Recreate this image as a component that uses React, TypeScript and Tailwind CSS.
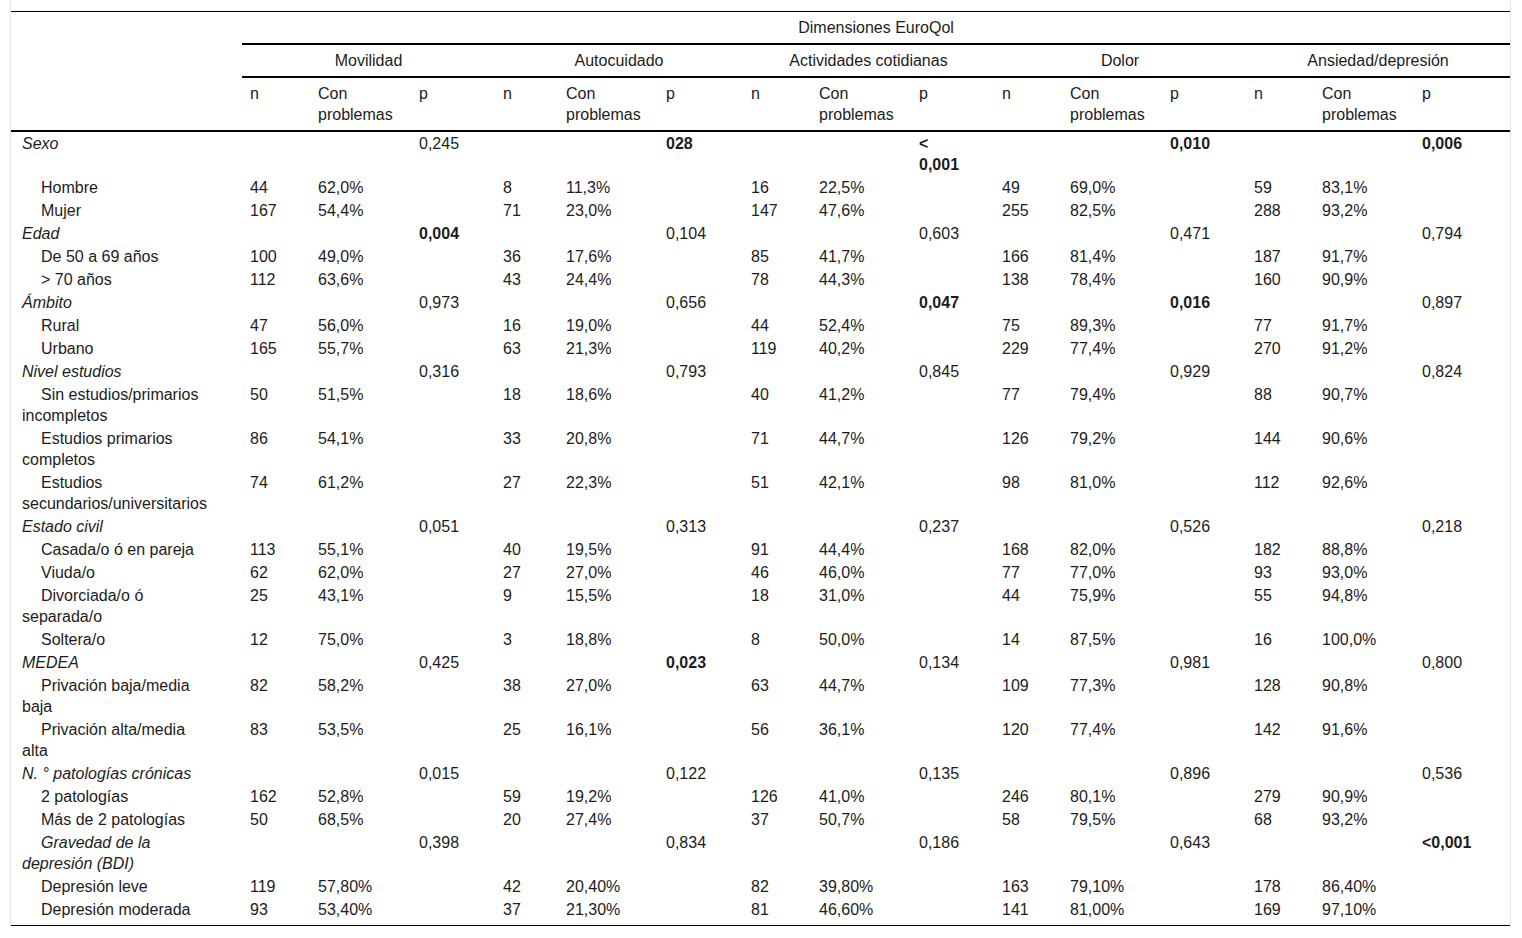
import React from "react";

type P = { v: string; b?: boolean };
type Row = {
  label: string;
  cat?: boolean;
  indentCat?: boolean;
  p?: P[];
  d?: [string, string][];
  last?: boolean;
};

const pv = (s: string): P => (s.startsWith("*") ? { v: s.slice(1), b: true } : { v: s });

const rows: Row[] = [
  { label: "Sexo", cat: true, p: ["0,245", "*028", "*< 0,001", "*0,010", "*0,006"].map(pv) },
  { label: "Hombre", d: [["44", "62,0%"], ["8", "11,3%"], ["16", "22,5%"], ["49", "69,0%"], ["59", "83,1%"]] },
  { label: "Mujer", d: [["167", "54,4%"], ["71", "23,0%"], ["147", "47,6%"], ["255", "82,5%"], ["288", "93,2%"]] },
  { label: "Edad", cat: true, p: ["*0,004", "0,104", "0,603", "0,471", "0,794"].map(pv) },
  { label: "De 50 a 69 años", d: [["100", "49,0%"], ["36", "17,6%"], ["85", "41,7%"], ["166", "81,4%"], ["187", "91,7%"]] },
  { label: "> 70 años", d: [["112", "63,6%"], ["43", "24,4%"], ["78", "44,3%"], ["138", "78,4%"], ["160", "90,9%"]] },
  { label: "Ámbito", cat: true, p: ["0,973", "0,656", "*0,047", "*0,016", "0,897"].map(pv) },
  { label: "Rural", d: [["47", "56,0%"], ["16", "19,0%"], ["44", "52,4%"], ["75", "89,3%"], ["77", "91,7%"]] },
  { label: "Urbano", d: [["165", "55,7%"], ["63", "21,3%"], ["119", "40,2%"], ["229", "77,4%"], ["270", "91,2%"]] },
  { label: "Nivel estudios", cat: true, p: ["0,316", "0,793", "0,845", "0,929", "0,824"].map(pv) },
  { label: "Sin estudios/primarios incompletos", d: [["50", "51,5%"], ["18", "18,6%"], ["40", "41,2%"], ["77", "79,4%"], ["88", "90,7%"]] },
  { label: "Estudios primarios completos", d: [["86", "54,1%"], ["33", "20,8%"], ["71", "44,7%"], ["126", "79,2%"], ["144", "90,6%"]] },
  { label: "Estudios secundarios/universitarios", d: [["74", "61,2%"], ["27", "22,3%"], ["51", "42,1%"], ["98", "81,0%"], ["112", "92,6%"]] },
  { label: "Estado civil", cat: true, p: ["0,051", "0,313", "0,237", "0,526", "0,218"].map(pv) },
  { label: "Casada/o ó en pareja", d: [["113", "55,1%"], ["40", "19,5%"], ["91", "44,4%"], ["168", "82,0%"], ["182", "88,8%"]] },
  { label: "Viuda/o", d: [["62", "62,0%"], ["27", "27,0%"], ["46", "46,0%"], ["77", "77,0%"], ["93", "93,0%"]] },
  { label: "Divorciada/o ó separada/o", d: [["25", "43,1%"], ["9", "15,5%"], ["18", "31,0%"], ["44", "75,9%"], ["55", "94,8%"]] },
  { label: "Soltera/o", d: [["12", "75,0%"], ["3", "18,8%"], ["8", "50,0%"], ["14", "87,5%"], ["16", "100,0%"]] },
  { label: "MEDEA", cat: true, p: ["0,425", "*0,023", "0,134", "0,981", "0,800"].map(pv) },
  { label: "Privación baja/media baja", d: [["82", "58,2%"], ["38", "27,0%"], ["63", "44,7%"], ["109", "77,3%"], ["128", "90,8%"]] },
  { label: "Privación alta/media alta", d: [["83", "53,5%"], ["25", "16,1%"], ["56", "36,1%"], ["120", "77,4%"], ["142", "91,6%"]] },
  { label: "N. ° patologías crónicas", cat: true, p: ["0,015", "0,122", "0,135", "0,896", "0,536"].map(pv) },
  { label: "2 patologías", d: [["162", "52,8%"], ["59", "19,2%"], ["126", "41,0%"], ["246", "80,1%"], ["279", "90,9%"]] },
  { label: "Más de 2 patologías", d: [["50", "68,5%"], ["20", "27,4%"], ["37", "50,7%"], ["58", "79,5%"], ["68", "93,2%"]] },
  { label: "Gravedad de la depresión (BDI)", cat: true, indentCat: true, p: ["0,398", "0,834", "0,186", "0,643", "*<0,001"].map(pv) },
  { label: "Depresión leve", d: [["119", "57,80%"], ["42", "20,40%"], ["82", "39,80%"], ["163", "79,10%"], ["178", "86,40%"]] },
  { label: "Depresión moderada", d: [["93", "53,40%"], ["37", "21,30%"], ["81", "46,60%"], ["141", "81,00%"], ["169", "97,10%"]], last: true },
];

const groups = ["Movilidad", "Autocuidado", "Actividades cotidianas", "Dolor", "Ansiedad/depresión"];

const colClasses = [
  ["w-[68px]", "w-[101px]", "w-[84px]"],
  ["w-[63px]", "w-[100px]", "w-[85px]"],
  ["w-[68px]", "w-[100px]", "w-[83px]"],
  ["w-[68px]", "w-[100px]", "w-[84px]"],
  ["w-[68px]", "w-[100px]", "w-[96px]"],
];

export default function App() {
  return (
    <div
      className="min-h-[938px] w-[1522px] bg-white text-[#1c1c1c]"
      style={{ fontFamily: '"Liberation Sans", Arial, Helvetica, sans-serif' }}
    >
      <div className="ml-[10px] w-[1501px] border-x border-[#e4e4e4] pt-[11px]">
        <table className="w-[1499px] table-fixed border-collapse border-y border-black text-[16px] leading-[21px]">
          <colgroup>
            <col className="w-[231px]" />
            {colClasses.map((c, i) => (
              <React.Fragment key={i}>
                <col className={c[0]} />
                <col className={c[1]} />
                <col className={c[2]} />
              </React.Fragment>
            ))}
          </colgroup>
          <thead>
            <tr>
              <th rowSpan={3} className="border-b-2 border-black p-0" />
              <th colSpan={15} className="border-b-2 border-black px-2 pt-[5px] pb-[5px] text-center font-normal">
                Dimensiones EuroQol
              </th>
            </tr>
            <tr>
              {groups.map((g) => (
                <th key={g} colSpan={3} className="border-b-2 border-black px-2 pt-[5px] pb-[5px] text-center font-normal">
                  {g}
                </th>
              ))}
            </tr>
            <tr>
              {groups.map((g) => (
                <React.Fragment key={g}>
                  <th className="border-b-2 border-black pt-[5px] pb-[5px] pl-2 pr-[24px] text-left align-top font-normal">n</th>
                  <th className="border-b-2 border-black pt-[5px] pb-[5px] pl-2 pr-[24px] text-left align-top font-normal">Con problemas</th>
                  <th className="border-b-2 border-black pt-[5px] pb-[5px] pl-2 pr-[24px] text-left align-top font-normal">p</th>
                </React.Fragment>
              ))}
            </tr>
          </thead>
          <tbody>
            {rows.map((r) => {
              const py = r.last ? "pt-px pb-[5px]" : "py-px";
              return (
                <tr key={r.label}>
                  <td
                    className={`${py} pl-[11px] pr-[33px] align-top ${r.cat ? "italic" : ""} ${
                      !r.cat || r.indentCat ? "indent-[19px]" : ""
                    }`}
                  >
                    {r.label}
                  </td>
                  {groups.map((g, i) => (
                    <React.Fragment key={g}>
                      <td className={`${py} pl-2 pr-[24px] align-top`}>{r.d ? r.d[i][0] : ""}</td>
                      <td className={`${py} pl-2 pr-[24px] align-top`}>{r.d ? r.d[i][1] : ""}</td>
                      <td className={`${py} pl-2 pr-[24px] align-top ${r.p && r.p[i].b ? "font-bold" : ""}`}>
                        {r.p ? r.p[i].v : ""}
                      </td>
                    </React.Fragment>
                  ))}
                </tr>
              );
            })}
          </tbody>
        </table>
      </div>
    </div>
  );
}
